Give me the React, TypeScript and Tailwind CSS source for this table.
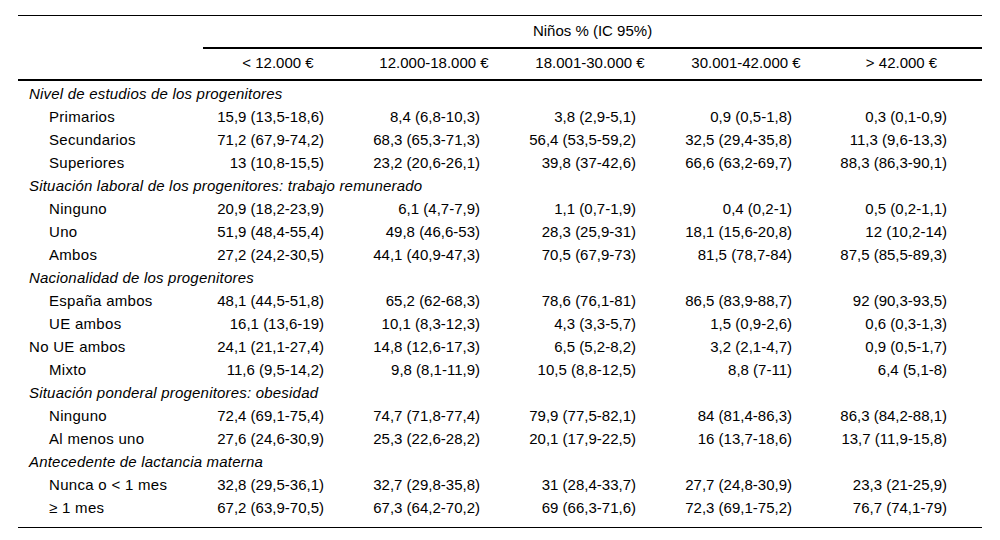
import React from 'react';

type Row = { label: string; indent?: boolean; section?: boolean; values?: string[] };

const rows: Row[] = [
  { label: 'Nivel de estudios de los progenitores', section: true },
  { label: 'Primarios', indent: true, values: ['15,9 (13,5-18,6)', '8,4 (6,8-10,3)', '3,8 (2,9-5,1)', '0,9 (0,5-1,8)', '0,3 (0,1-0,9)'] },
  { label: 'Secundarios', indent: true, values: ['71,2 (67,9-74,2)', '68,3 (65,3-71,3)', '56,4 (53,5-59,2)', '32,5 (29,4-35,8)', '11,3 (9,6-13,3)'] },
  { label: 'Superiores', indent: true, values: ['13 (10,8-15,5)', '23,2 (20,6-26,1)', '39,8 (37-42,6)', '66,6 (63,2-69,7)', '88,3 (86,3-90,1)'] },
  { label: 'Situación laboral de los progenitores: trabajo remunerado', section: true },
  { label: 'Ninguno', indent: true, values: ['20,9 (18,2-23,9)', '6,1 (4,7-7,9)', '1,1 (0,7-1,9)', '0,4 (0,2-1)', '0,5 (0,2-1,1)'] },
  { label: 'Uno', indent: true, values: ['51,9 (48,4-55,4)', '49,8 (46,6-53)', '28,3 (25,9-31)', '18,1 (15,6-20,8)', '12 (10,2-14)'] },
  { label: 'Ambos', indent: true, values: ['27,2 (24,2-30,5)', '44,1 (40,9-47,3)', '70,5 (67,9-73)', '81,5 (78,7-84)', '87,5 (85,5-89,3)'] },
  { label: 'Nacionalidad de los progenitores', section: true },
  { label: 'España ambos', indent: true, values: ['48,1 (44,5-51,8)', '65,2 (62-68,3)', '78,6 (76,1-81)', '86,5 (83,9-88,7)', '92 (90,3-93,5)'] },
  { label: 'UE ambos', indent: true, values: ['16,1 (13,6-19)', '10,1 (8,3-12,3)', '4,3 (3,3-5,7)', '1,5 (0,9-2,6)', '0,6 (0,3-1,3)'] },
  { label: 'No UE ambos', values: ['24,1 (21,1-27,4)', '14,8 (12,6-17,3)', '6,5 (5,2-8,2)', '3,2 (2,1-4,7)', '0,9 (0,5-1,7)'] },
  { label: 'Mixto', indent: true, values: ['11,6 (9,5-14,2)', '9,8 (8,1-11,9)', '10,5 (8,8-12,5)', '8,8 (7-11)', '6,4 (5,1-8)'] },
  { label: 'Situación ponderal progenitores: obesidad', section: true },
  { label: 'Ninguno', indent: true, values: ['72,4 (69,1-75,4)', '74,7 (71,8-77,4)', '79,9 (77,5-82,1)', '84 (81,4-86,3)', '86,3 (84,2-88,1)'] },
  { label: 'Al menos uno', indent: true, values: ['27,6 (24,6-30,9)', '25,3 (22,6-28,2)', '20,1 (17,9-22,5)', '16 (13,7-18,6)', '13,7 (11,9-15,8)'] },
  { label: 'Antecedente de lactancia materna', section: true },
  { label: 'Nunca o < 1 mes', indent: true, values: ['32,8 (29,5-36,1)', '32,7 (29,8-35,8)', '31 (28,4-33,7)', '27,7 (24,8-30,9)', '23,3 (21-25,9)'] },
  { label: '≥ 1 mes', indent: true, values: ['67,2 (63,9-70,5)', '67,3 (64,2-70,2)', '69 (66,3-71,6)', '72,3 (69,1-75,2)', '76,7 (74,1-79)'] },
];

const heads = ['< 12.000 €', '12.000-18.000 €', '18.001-30.000 €', '30.001-42.000 €', '> 42.000 €'];

export default function App() {
  return (
    <div className="min-h-[540px] w-[1000px] bg-white pl-[18px] pt-[15px] text-[15px] text-black" style={{ fontFamily: '"Liberation Sans", Arial, sans-serif' }}>
      <table className="w-[964px] table-fixed border-collapse border-t border-black">
        <colgroup>
          <col className="w-[185px]" />
          <col className="w-[156px]" />
          <col className="w-[156px]" />
          <col className="w-[156px]" />
          <col className="w-[156px]" />
          <col className="w-[155px]" />
        </colgroup>
        <thead>
          <tr className="h-[32px]">
            <th />
            <th colSpan={5} className="border-b-2 border-black text-center font-normal">Niños % (IC 95%)</th>
          </tr>
          <tr className="h-[32px]">
            <th className="border-b-2 border-black" />
            {heads.map(h => (
              <th key={h} className="border-b-2 border-black pr-[6px] text-center font-normal">{h}</th>
            ))}
          </tr>
        </thead>
        <tbody className="border-b border-black">
          <tr className="h-[2px]"><td colSpan={6} /></tr>
          {rows.map((r, i) => (
            <tr key={i} className="h-[23px] leading-[23px]">
              {r.section ? (
                <td colSpan={6} className="whitespace-nowrap pl-[11px] italic tracking-[0.2px]">{r.label}</td>
              ) : (
                <>
                  <td className={`whitespace-nowrap tracking-[0.3px] ${r.indent ? 'pl-[31px]' : 'pl-[11px]'}`}>{r.label}</td>
                  {r.values!.map((v, j) => (
                    <td key={j} className="whitespace-nowrap pr-[35px] text-right">{v}</td>
                  ))}
                </>
              )}
            </tr>
          ))}
          <tr className="h-[9px]"><td colSpan={6} /></tr>
        </tbody>
      </table>
    </div>
  );
}
